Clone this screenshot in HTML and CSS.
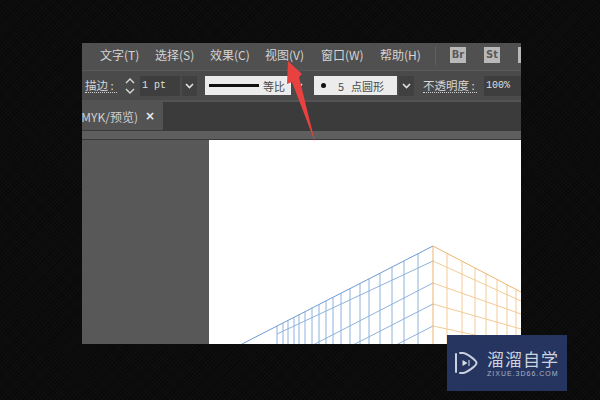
FILE: index.html
```html
<!DOCTYPE html>
<html lang="zh">
<head>
<meta charset="utf-8">
<title>视图菜单</title>
<link rel="stylesheet" href="styles.css">
</head>
<body>
<main class="stage">
  <div class="window">
    <nav class="menubar">
      <span class="menu m1">文字(T)</span>
      <span class="menu">选择(S)</span>
      <span class="menu">效果(C)</span>
      <span class="menu">视图(V)</span>
      <span class="menu">窗口(W)</span>
      <span class="menu">帮助(H)</span>
      <i class="sep"></i>
      <span class="app">Br</span>
      <span class="app">St</span>
      <span class="app"></span>
    </nav>
    <div class="toolbar">
      <span class="label first">描边 :</span>
      <svg class="spin" width="10" height="18" viewBox="0 0 10 18"><path d="M1 6l4-4 4 4M1 12l4 4 4-4" fill="none" stroke="#d8d8d8" stroke-width="1.4"/></svg>
      <span class="input pt">1 pt</span>
      <span class="drop"><svg width="9" height="6" viewBox="0 0 9 6"><path d="M1 1l3.500 3.500L8 1" fill="none" stroke="#e0e0e0" stroke-width="1.600"/></svg></span>
      <span class="select stroke"><i class="line"></i><span>等比</span></span>
      <span class="drop plain"><svg width="9" height="6" viewBox="0 0 9 6"><path d="M1 1l3.500 3.500L8 1" fill="none" stroke="#e0e0e0" stroke-width="1.600"/></svg></span>
      <span class="select brush"><i class="dot"></i><span class="five">5</span><span>点圆形</span></span>
      <span class="drop"><svg width="9" height="6" viewBox="0 0 9 6"><path d="M1 1l3.500 3.500L8 1" fill="none" stroke="#e0e0e0" stroke-width="1.600"/></svg></span>
      <span class="label opacity">不透明度 :</span>
      <span class="input pct">100%</span>
    </div>
    <div class="tabbar">
      <div class="tab"><span class="tabname">MYK/预览)</span><span class="close">×</span></div>
    </div>
    <div class="ruler"></div>
    <div class="work">
      <aside class="side"></aside>
      <div class="canvas">
        <svg class="grid" width="312" height="205" viewBox="209 139 312 205">
          <g fill="none" stroke="#8db2dc" stroke-width="1">
            <path d="M277 325V344M283 322V344M288 319.400V344M294 316.300V344M299 313.700V344M305 310.700V344M312 307V344M319 303.500V344M326 300V344M333 296.300V344M341 292.200V344M350 287.600V344M360 282.400V344M369 277.800V344M380 272.200V344M392 266V344M404 259.900V344M418 252.700V344"/>
            <path d="M433 260L277 333M433 282L313 344M433 303L353 344M433 325L396 344"/>
            <path d="M433 245L242 343" stroke="#6f9bcf"/>
          </g>
          <g fill="none" stroke="#f3cb94" stroke-width="1">
            <path d="M447 252.300V344M462 260.200V344M475 267V344M486 272.700V344M497 278.500V344M507 283.700V344M516 288.400V344"/>
            <path d="M433 260L521 300M433 282L521 313M433 303L521 328M433 325L521 344"/>
            <path d="M433 245L521 291M433 245V344" stroke="#edb470"/>
          </g>
        </svg>
      </div>
    </div>
  </div>
  <svg class="arrow" width="50" height="90" viewBox="0 0 50 90"><path d="M8 1L22 14L19 17L35 82L12 22L7 24Z" fill="#e8413f"/></svg>
  <aside class="logo">
    <svg class="logo-icon" width="24" height="24" viewBox="0 0 24 24">
      <path d="M2 3V21" fill="none" stroke="#c9d0de" stroke-width="2" stroke-linecap="round"/>
      <path d="M6 2H9C12 2 22.500 9 22.500 12S12 22 9 22H6" fill="none" stroke="#c9d0de" stroke-width="2" stroke-linecap="round"/>
      <path d="M8.500 9L13.500 12L8.500 15Z" fill="#d8dde8"/><path d="M15 9V15" stroke="#d8dde8" stroke-width="1"/>
    </svg>
    <div class="logo-text">
      <div class="logo-cn">溜溜自学</div>
      <div class="logo-en">ZIXUE.3D66.COM</div>
    </div>
  </aside>
</main>
</body>
</html>
```
FILE: styles.css
```css
* { box-sizing: border-box; }
html, body { margin: 0; padding: 0; }
body { width: 600px; height: 400px; overflow: hidden; background: #0c0c0c; font-family: "Noto Sans CJK SC", "Liberation Sans", sans-serif; }
.stage {
  position: relative; width: 600px; height: 400px; padding: 43px 79px 56px 82px;
  background-color: #0c0c0c;
  background-image:
    repeating-linear-gradient(45deg, rgba(255,255,255,.012) 0 1px, transparent 1px 3px),
    repeating-linear-gradient(-45deg, rgba(0,0,0,.3) 0 1px, transparent 1px 3px);
}
.window { height: 301px; display: flex; flex-direction: column; background: #535353; overflow: hidden; }
.menubar { height: 27px; flex: none; display: flex; align-items: center; padding: 0 0 3px 18px; background: #505050; color: #d4d4d4; font-size: 12px; white-space: nowrap; }
.menu { flex: none; width: 39px; margin-right: 16px; line-height: 24px; }
.menu:nth-child(4) { margin-right: 17px; }
.menu:nth-child(5) { margin-right: 16px; width: 43px; }
.menu:nth-child(6) { width: 41px; margin-right: 0; }
.sep { flex: none; width: 1px; height: 19px; margin: 0 14px; background: #5f5f5f; }
.app { width: 16px; height: 16px; margin-right: 18px; background: #b9b9b9; color: #5a5a5a; font: bold 10px/16px "DejaVu Sans", sans-serif; text-align: center; flex: none; }
.toolbar { height: 30px; flex: none; display: flex; align-items: center; background: #4a4a4a; border-top: 1px solid #5a5a5a; color: #d6d6d6; font-size: 11.500px; white-space: nowrap; }
.label { flex: none; border-bottom: 1px dotted #cfcfcf; line-height: 14px; }
.first { margin-left: 3px; width: 32px; }
.spin { margin-left: 8px; flex: none; }
.input { height: 20px; background: #3e3e3e; color: #dedede; font: 10px/19px "Liberation Mono", monospace; padding-left: 2px; flex: none; }
.pt { width: 40px; margin-left: 5px; }
.drop { width: 15px; height: 20px; display: flex; align-items: center; justify-content: center; background: #404040; flex: none; margin-left: 2px; }
.plain { background: transparent; margin-left: 0; }
.select { height: 19px; background: #ececec; color: #4b4b4b; display: flex; align-items: center; flex: none; font-size: 11px; }
.stroke { width: 86px; margin-left: 8px; padding-left: 4px; }
.line { width: 50px; height: 3px; background: #111; margin-right: 4px; }
.brush { width: 83px; margin-left: 8px; padding-left: 7px; }
.dot { width: 5px; height: 5px; border-radius: 50%; background: #111; }
.five { margin: 0 7px 0 12px; }
.opacity { margin-left: 9px; width: 54px; }
.pct { width: 38px; margin-left: 7px; }
.tabbar { height: 29px; flex: none; margin-top: 2px; background: #3b3b3b; display: flex; border-bottom: 1px solid #3a3a3a; }
.tab { width: 81px; background: #535353; display: flex; align-items: center; justify-content: flex-end; color: #d0d0d0; font-size: 12px; white-space: nowrap; overflow: hidden; }
.tabname { margin-right: 7px; flex: none; }
.close { flex: none; width: 18px; font: bold 12px/16px "DejaVu Sans", sans-serif; color: #ececec; }
.ruler { height: 9px; flex: none; background: #5e5e5e; border-bottom: 1px solid #3a3a3a; }
.work { flex: 1; display: flex; min-height: 0; }
.side { width: 127px; flex: none; background: #585858; }
.canvas { flex: 1; background: #fff; overflow: hidden; }
.grid { display: block; }
.arrow { position: absolute; left: 280px; top: 60px; }
.logo { position: absolute; left: 447px; top: 335px; width: 120px; height: 56px; background: #25355f; display: flex; align-items: center; padding-left: 7px; }
.logo-icon { flex: none; }
.logo-text { margin-left: 9px; color: #ccd2de; }
.logo-cn { font-size: 17px; line-height: 20px; letter-spacing: 1px; white-space: nowrap; }
.logo-en { font: 7px/9px "Liberation Sans", sans-serif; letter-spacing: 1px; white-space: nowrap; color: #a9b2c6; }
```
